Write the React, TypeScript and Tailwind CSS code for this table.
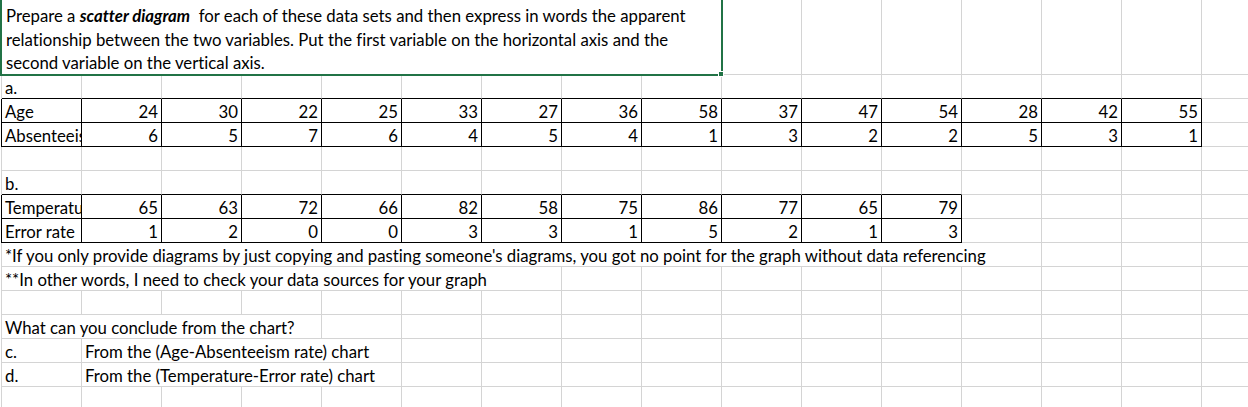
import clsx from "clsx";

type Cell = {
  t?: string;
  span?: 1 | 4 | 7 | 9 | 13;
  num?: boolean;
  r?: "k" | "g";
  b?: "k" | "g";
  clip?: boolean;
};

const spanW = {
  1: "w-[80px]",
  4: "w-[320px]",
  7: "w-[560px]",
  9: "w-[720px]",
  13: "w-[1040px]",
};

function blanks(n: number, b: "k" | "g" = "g"): Cell[] {
  return Array.from({ length: n }, () => ({ b }));
}

function Row({ cells, left = "g" }: { cells: Cell[]; left?: "k" | "g" }) {
  return (
    <div
      className={clsx(
        "flex h-[24px] shrink-0 border-l",
        left === "k" ? "border-l-black" : "border-l-[#d4d4d4]"
      )}
    >
      {cells.map((c, i) => (
        <div
          key={i}
          className={clsx(
            "flex h-full shrink-0 items-end border-r border-b pb-[1px] leading-[18px] whitespace-nowrap",
            spanW[c.span ?? 1],
            c.r === "k" ? "border-r-black" : "border-r-[#d4d4d4]",
            c.b === "k" ? "border-b-black" : "border-b-[#d4d4d4]",
            c.num ? "justify-end pr-[3px]" : "pl-[3px]",
            c.clip ? "overflow-hidden" : "overflow-visible"
          )}
        >
          {c.t}
        </div>
      ))}
    </div>
  );
}

const age = [24, 30, 22, 25, 33, 27, 36, 58, 37, 47, 54, 28, 42, 55];
const absent = [6, 5, 7, 6, 4, 5, 4, 1, 3, 2, 2, 5, 3, 1];
const temp = [65, 63, 72, 66, 82, 58, 75, 86, 77, 65, 79];
const err = [1, 2, 0, 0, 3, 3, 1, 5, 2, 1, 3];

// label cell, bordered numbers, then plain grid cells up to `total` columns
function dataRow(label: string, vals: number[], total: number): Cell[] {
  return [
    { t: label, r: "k", b: "k", clip: true },
    ...vals.map((v) => ({ t: String(v), num: true, r: "k" as const, b: "k" as const })),
    ...blanks(total - vals.length - 1),
  ];
}

export default function App() {
  return (
    <div className="relative h-[407px] w-[1248px] overflow-hidden bg-white pl-[1px] font-['Lato',sans-serif] text-[16.75px] text-black [font-variant-ligatures:none]">
      {/* row 1, merged text cell */}
      <div className="flex h-[75px] border-l border-l-[#d4d4d4]">
        <div className="h-full w-[720px] shrink-0 border-r border-b border-[#d4d4d4] pt-[4px] pl-[4px] leading-[23.5px] whitespace-pre">
          <div>
            Prepare a <b className="italic">scatter diagram</b>  for each of these data sets and then express in words the apparent
          </div>
          <div>relationship between the two variables. Put the first variable on the horizontal axis and the</div>
          <div>second variable on the vertical axis.</div>
        </div>
        {Array.from({ length: 7 }, (_, i) => (
          <div key={i} className="h-full w-[80px] shrink-0 border-r border-b border-[#d4d4d4]" />
        ))}
      </div>

      <Row cells={[{ t: "a.", b: "k" }, ...blanks(14, "k"), ...blanks(1)]} />
      <Row left="k" cells={dataRow("Age", age, 16)} />
      <Row left="k" cells={dataRow("Absenteeism", absent, 16)} />
      <Row cells={blanks(16)} />
      <Row cells={[{ t: "b.", b: "k" }, ...blanks(11, "k"), ...blanks(4)]} />
      <Row left="k" cells={dataRow("Temperature", temp, 16)} />
      <Row left="k" cells={dataRow("Error rate", err, 16)} />
      <Row
        cells={[
          {
            t: "*If you only provide diagrams by just copying and pasting someone's diagrams, you got no point for the graph without data referencing",
            span: 13,
          },
          ...blanks(3),
        ]}
      />
      <Row
        cells={[{ t: "**In other words, I need to check your data sources for your graph", span: 7 }, ...blanks(9)]}
      />
      <Row cells={blanks(16)} />
      <Row cells={[{ t: "What can you conclude from the chart?", span: 4 }, ...blanks(12)]} />
      <Row cells={[{ t: "c." }, { t: "From the (Age-Absenteeism rate) chart", span: 4 }, ...blanks(11)]} />
      <Row cells={[{ t: "d." }, { t: "From the (Temperature-Error rate) chart", span: 4 }, ...blanks(11)]} />
      <Row cells={blanks(16)} />

      {/* selection outline around the merged cell */}
      <div className="pointer-events-none absolute top-[-2px] left-0 h-[78px] w-[723px] border-2 border-[#217346]" />
      <div className="pointer-events-none absolute top-[71px] left-[718px] h-[6px] w-[6px] border border-white bg-[#217346]" />
    </div>
  );
}
